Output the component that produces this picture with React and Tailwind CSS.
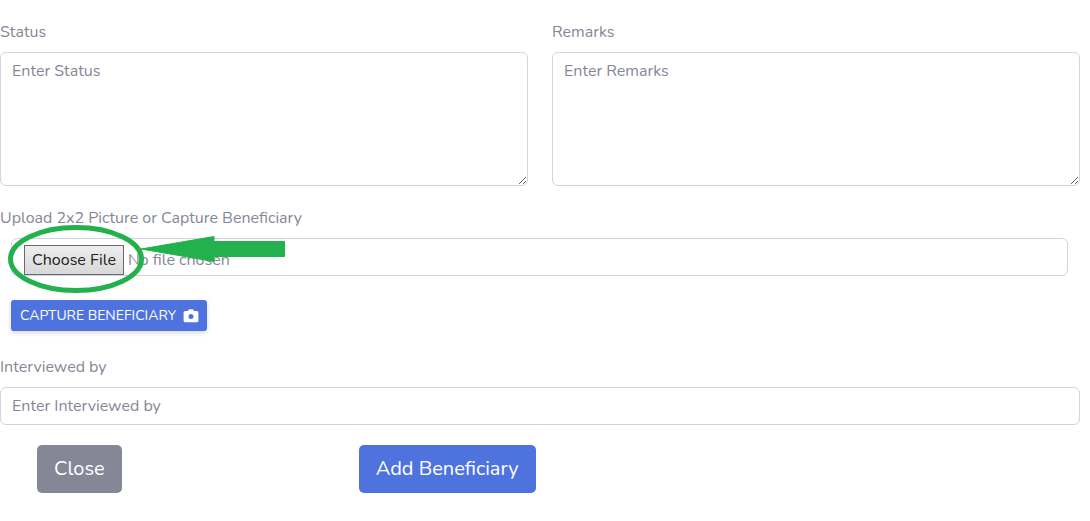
import React from "react";

const fieldClass =
  "block w-full rounded-[6px] border border-[#d1d3e2] bg-white px-[11px] text-[16px] leading-6 text-[#6e707e] placeholder:text-[#858796] placeholder:opacity-100";

function Field({ id, label, children }) {
  return (
    <div className="flex min-w-0 flex-col gap-2">
      <label htmlFor={id}>{label}</label>
      {children}
    </div>
  );
}

function CameraIcon() {
  return (
    <svg width="16" height="14" viewBox="0 0 16 14" fill="currentColor" aria-hidden="true">
      <path
        fillRule="evenodd"
        d="M5.4 1.1 C5.6 .5 6.1 .2 6.7 .2 H9.3 C9.9 .2 10.4 .5 10.6 1.1 L11 2 H13.6 C14.7 2 15.4 2.7 15.4 3.8 V11.4 C15.4 12.5 14.7 13.2 13.6 13.2 H2.4 C1.3 13.2 .6 12.5 .6 11.4 V3.8 C.6 2.7 1.3 2 2.4 2 H5 Z M8 5.1 A2.5 2.5 0 1 0 8 10.1 A2.5 2.5 0 1 0 8 5.1 Z"
      />
    </svg>
  );
}

function Highlight() {
  return (
    <svg
      className="pointer-events-none absolute -top-4 left-2 z-10"
      width="280"
      height="74"
      viewBox="8 222 280 74"
      fill="none"
      aria-hidden="true"
    >
      <ellipse cx="76" cy="259" rx="65.5" ry="31.5" stroke="#22b14c" strokeWidth="5" />
      <path
        d="M141 249 L214 236.5 V241.5 H284.5 V256.5 H214 V261.5 Z"
        fill="#22b14c"
        stroke="#22b14c"
        strokeLinejoin="round"
      />
    </svg>
  );
}

export default function App() {
  return (
    <form
      className="flex flex-col gap-5 bg-white pt-5 pr-2.5 pb-7 font-['Nunito','Lato',sans-serif] text-[16px] leading-6 text-[#858796]"
      onSubmit={(e) => e.preventDefault()}
    >
      <div className="grid grid-cols-2 gap-6">
        <Field id="status" label="Status">
          <textarea id="status" rows={5} placeholder="Enter Status" className={`${fieldClass} resize-y py-1.5`} />
        </Field>
        <Field id="remarks" label="Remarks">
          <textarea id="remarks" rows={5} placeholder="Enter Remarks" className={`${fieldClass} resize-y py-1.5`} />
        </Field>
      </div>

      <div className="flex flex-col gap-2">
        <label htmlFor="picture">Upload 2x2 Picture or Capture Beneficiary</label>
        <div className="relative flex flex-col items-start gap-6">
          <Highlight />
          <div className="w-full pr-3 pl-[11px]">
            <input
              id="picture"
              type="file"
              className="block h-[38px] w-full rounded-[6px] border border-[#d1d3e2] px-3 py-1.5 text-[16px] leading-6 text-[#858796] file:mr-1 file:h-[30px] file:border file:border-solid file:border-[#6b6b6b] file:bg-linear-to-b file:from-[#eeeeee] file:to-[#d8d8d8] file:px-[7px] file:text-[16px] file:text-[#222222]"
            />
          </div>
          <button
            type="button"
            className="ml-[11px] flex h-[31px] items-center gap-[7px] rounded-[3px] bg-[#4e73df] px-2 pl-[9px] text-[14px] text-white uppercase shadow-[0_2px_4px_rgba(58,59,69,0.2)]"
          >
            Capture Beneficiary
            <CameraIcon />
          </button>
        </div>
      </div>

      <div className="pt-1">
        <Field id="interviewer" label="Interviewed by">
          <input id="interviewer" type="text" placeholder="Enter Interviewed by" className={`${fieldClass} h-[38px] py-1.5`} />
        </Field>
      </div>

      <div className="flex gap-[237px] pl-[37px] text-[20px] leading-[30px] text-white">
        <button type="button" className="h-12 rounded-[5px] bg-[#858796] px-[17px]">Close</button>
        <button type="submit" className="h-12 rounded-[5px] bg-[#4e73df] px-[17px]">Add Beneficiary</button>
      </div>
    </form>
  );
}
